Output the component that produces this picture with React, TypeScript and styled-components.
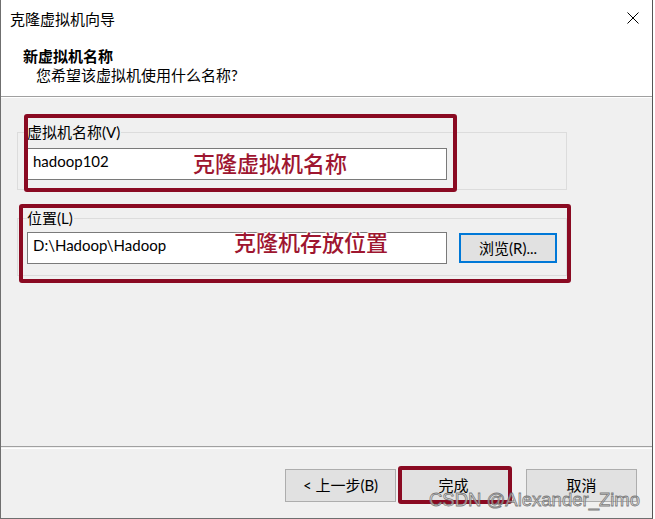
import styled, { createGlobalStyle } from 'styled-components'

const GlobalStyle = createGlobalStyle`
  html, body {
    margin: 0;
    padding: 0;
    background: #ffffff;
  }
  body {
    font-family: Lato, 'Noto Sans CJK SC', sans-serif;
    font-size: 15px;
    color: #000;
  }
`

// 红框标注（截图上后加的）
const marks = [
  { left: 23, top: 114, width: 433, height: 78 },
  { left: 18, top: 204, width: 552, height: 79 },
  { left: 397, top: 466, width: 114, height: 38 }
]

export default function App() {
  return (
    <>
      <GlobalStyle />
      <Window>
        <Header>
          <TitleBar>
            <Title>克隆虚拟机向导</Title>
            <CloseIcon viewBox="0 0 12 12">
              <path d="M0.5 0.5 L11.5 11.5 M11.5 0.5 L0.5 11.5" stroke="#000" strokeWidth="1" fill="none" />
            </CloseIcon>
          </TitleBar>
          <Heading>新虚拟机名称</Heading>
          <SubHeading>您希望该虚拟机使用什么名称?</SubHeading>
        </Header>

        <Body>
          <GroupBox $top={34}>
            <Legend>虚拟机名称(V)</Legend>
            <Row $top={6}>
              <TextBox>hadoop102</TextBox>
            </Row>
          </GroupBox>
          <GroupBox $top={28}>
            <Legend>位置(L)</Legend>
            <Row $top={4}>
              <TextBox>D:\Hadoop\Hadoop</TextBox>
              <BrowseButton>浏览(R)...</BrowseButton>
            </Row>
          </GroupBox>
        </Body>

        <Footer>
          <Button>&lt; 上一步(B)</Button>
          <Button $gap={2}>完成</Button>
          <Button $gap={17}>取消</Button>
        </Footer>

        {marks.map((m, i) => (
          <RedFrame key={i} style={{ left: m.left, top: m.top, width: m.width, height: m.height }} />
        ))}
        <Note style={{ left: 192, top: 147 }}>克隆虚拟机名称</Note>
        <Note style={{ left: 233, top: 226 }}>克隆机存放位置</Note>
        <Watermark>CSDN @Alexander_Zimo</Watermark>
      </Window>
    </>
  )
}

const Window = styled.div`
  position: relative;
  width: 653px;
  height: 519px;
  box-sizing: border-box;
  border-left: 1px solid #6f6f6f;
  border-right: 1px solid #555;
  border-bottom: 1px solid #6f6f6f;
  display: flex;
  flex-direction: column;
  overflow: hidden;
`
const Header = styled.div`
  background: #fff;
  height: 97px;
  box-sizing: border-box;
  border-bottom: 1px solid #a0a0a0;
`
const TitleBar = styled.div`
  height: 40px;
  display: flex;
  justify-content: space-between;
  align-items: flex-start;
  padding: 0 13px 0 9px;
`
const Title = styled.div`
  line-height: 19px;
  margin-top: 10px;
`
const CloseIcon = styled.svg`
  width: 12px;
  height: 12px;
  margin-top: 12px;
`
const Heading = styled.div`
  font-weight: 700;
  line-height: 19px;
  margin: 7px 0 0 22px;
`
const SubHeading = styled.div`
  line-height: 19px;
  margin-left: 35px;
`
const Body = styled.div`
  flex: 1;
  background: #f0f0f0;
  border-top: 1px solid #fff;
  display: flex;
  flex-direction: column;
`
const GroupBox = styled.div<{ $top: number }>`
  margin: ${(p) => p.$top}px 0 0 16px;
  width: 550px;
  height: 58px;
  box-sizing: border-box;
  border: 1px solid #dcdcdc;
`
const Legend = styled.div`
  width: fit-content;
  margin: -10px 0 0 9px;
  padding-right: 1px;
  line-height: 19px;
  background: #f0f0f0;
`
const Row = styled.div<{ $top: number }>`
  display: flex;
  align-items: center;
  gap: 12px;
  margin: ${(p) => p.$top}px 0 0 9px;
`
const TextBox = styled.div`
  width: 420px;
  height: 32px;
  box-sizing: border-box;
  border: 1px solid #7a7a7a;
  background: #fff;
  padding: 3px 5px 0;
  line-height: 19px;
`
const BrowseButton = styled.div`
  width: 98px;
  height: 30px;
  box-sizing: border-box;
  border: 2px solid #0078d7;
  background: #e1e1e1;
  display: flex;
  align-items: center;
  justify-content: center;
  line-height: 19px;
`
const Footer = styled.div`
  height: 72px;
  box-sizing: border-box;
  background: #f0f0f0;
  border-top: 1px solid #a0a0a0;
  box-shadow: inset 0 1px 0 #f0f0f0, inset 0 2px 0 #fff;
  display: flex;
  justify-content: flex-end;
  align-items: flex-start;
  padding: 22px 15px 0 0;
`
const Button = styled.div<{ $gap?: number }>`
  width: 111px;
  height: 33px;
  box-sizing: border-box;
  margin-left: ${(p) => p.$gap ?? 0}px;
  border: 1px solid #adadad;
  background: #e1e1e1;
  display: flex;
  align-items: center;
  justify-content: center;
  line-height: 19px;
`
const RedFrame = styled.div`
  position: absolute;
  box-sizing: border-box;
  border: 4px solid #8a0a22;
  border-radius: 3px;
  pointer-events: none;
`
const Note = styled.div`
  position: absolute;
  font-family: 'Noto Sans CJK SC', sans-serif;
  font-size: 22px;
  font-weight: 500;
  line-height: 30px;
  white-space: nowrap;
  color: #9e1630;
  text-shadow: 0 0 1px #fff, 1px 1px 1px rgba(255, 255, 255, 0.9), -1px -1px 1px rgba(255, 255, 255, 0.9),
    1px -1px 1px rgba(255, 255, 255, 0.9), -1px 1px 1px rgba(255, 255, 255, 0.9);
`
const Watermark = styled.div`
  position: absolute;
  left: 428px;
  top: 489px;
  font-family: 'Liberation Sans', Arial, sans-serif;
  font-size: 18.5px;
  line-height: 22px;
  white-space: nowrap;
  color: rgba(225, 225, 225, 0.7);
  -webkit-text-stroke: 0.8px rgba(95, 95, 95, 0.8);
`
